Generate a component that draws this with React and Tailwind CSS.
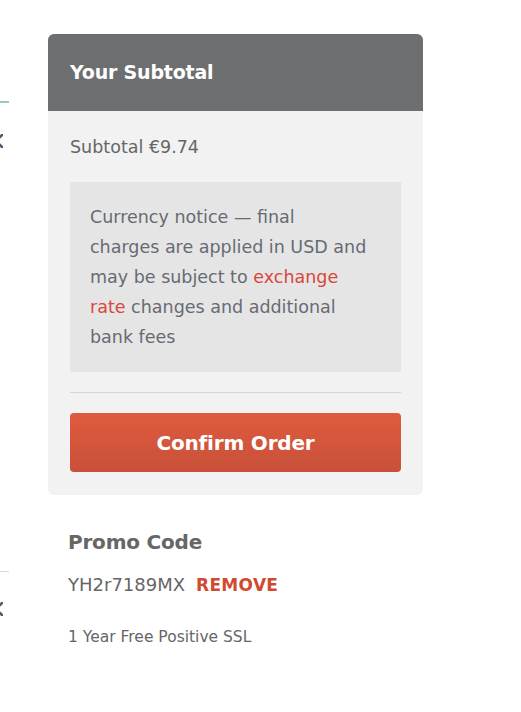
function XMark() {
  return (
    <svg width="14" height="14" viewBox="0 0 14 14" className="-ml-[11px] block">
      <path d="M1 1 L13 13 M13 1 L1 13" stroke="#4b5c73" strokeWidth="2.6" strokeLinecap="square" />
    </svg>
  );
}

export default function App() {
  const font = { fontFamily: "'DejaVu Sans', sans-serif" };
  return (
    <div className="w-[521px] h-[712px] bg-white flex" style={font}>
      <div className="w-[9px] shrink-0 overflow-hidden">
        <div className="mt-[101px] h-[2px] w-[9px] bg-[#9cc5c7]" />
        <div className="mt-[31px]"><XMark /></div>
        <div className="mt-[423px] h-[1px] w-[9px] bg-[#d9d9d9]" />
        <div className="mt-[30px]"><XMark /></div>
      </div>
      <div className="ml-[39px] w-[375px] shrink-0">
        <div className="mt-[34px] rounded-[6px] bg-[#f2f2f2] overflow-hidden">
          <div className="h-[77px] bg-[#6d6e70] px-[22px] flex items-center">
            <h2 className="text-[19px] font-bold text-white tracking-[-0.2px]">Your Subtotal</h2>
          </div>
          <div className="px-[22px] pt-[24px] pb-[23px]">
            <div className="text-[17.5px] leading-[24px] text-[#666666]">Subtotal €9.74</div>
            <div className="mt-[23px] bg-[#e5e5e5] pl-[20px] pr-[10px] py-[20px] text-[17.5px] leading-[30px] text-[#666b73]">
              Currency notice — final
              <br />
              charges are applied in USD and
              <br />
              may be subject to <span className="text-[#d9473a]">exchange</span>
              <br />
              <span className="text-[#d9473a]">rate</span> changes and additional
              <br />
              bank fees
            </div>
            <div className="mt-[20px] h-[1px] bg-[#d6d6d6]" />
            <button className="mt-[20px] w-full h-[59px] rounded-[4px] bg-gradient-to-b from-[#df5b3d] to-[#c8503a] text-white text-[20px] font-bold tracking-[-0.2px]">
              Confirm Order
            </button>
          </div>
        </div>
        <div className="px-[20px] pt-[33px]">
          <h3 className="text-[20px] font-bold leading-[28px] text-[#666666] tracking-[-0.2px]">Promo Code</h3>
          <div className="mt-[17px] text-[18px] leading-[24px] text-[#666666] flex items-center gap-[11px]">
            <span>YH2r7189MX</span>
            <span className="font-bold text-[17px] text-[#cf4a30] tracking-[0.3px]">REMOVE</span>
          </div>
          <div className="mt-[30px] text-[15.5px] leading-[20px] text-[#666666]">1 Year Free Positive SSL</div>
        </div>
      </div>
    </div>
  );
}
